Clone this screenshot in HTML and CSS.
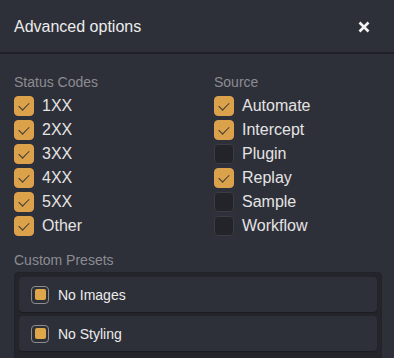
FILE: index.html
```html
<!DOCTYPE html>
<html>
<head>
<meta charset="utf-8">
<link rel="stylesheet" href="styles.css">
</head>
<body>
<div class="dialog">
  <div class="header">
    <div class="title">Advanced options</div>
    <button class="close" aria-label="Close">
      <svg width="12" height="12" viewBox="0 0 12 12"><path d="M1.5 1.5 L10.5 10.5 M10.5 1.5 L1.5 10.5" stroke="#f2f2f2" stroke-width="2.6" stroke-linecap="butt" fill="none"/></svg>
    </button>
  </div>
  <div class="content">
    <div class="columns">
      <div class="group">
        <div class="label">Status Codes</div>
        <div class="row"><span class="box on"></span><span>1XX</span></div>
        <div class="row"><span class="box on"></span><span>2XX</span></div>
        <div class="row"><span class="box on"></span><span>3XX</span></div>
        <div class="row"><span class="box on"></span><span>4XX</span></div>
        <div class="row"><span class="box on"></span><span>5XX</span></div>
        <div class="row"><span class="box on"></span><span>Other</span></div>
      </div>
      <div class="group">
        <div class="label">Source</div>
        <div class="row"><span class="box on"></span><span>Automate</span></div>
        <div class="row"><span class="box on"></span><span>Intercept</span></div>
        <div class="row"><span class="box"></span><span>Plugin</span></div>
        <div class="row"><span class="box on"></span><span>Replay</span></div>
        <div class="row"><span class="box"></span><span>Sample</span></div>
        <div class="row"><span class="box"></span><span>Workflow</span></div>
      </div>
    </div>
    <div class="label presets-label">Custom Presets</div>
    <div class="presets">
      <div class="preset"><span class="pbox"><span class="dot"></span></span><span>No Images</span></div>
      <div class="preset"><span class="pbox"><span class="dot"></span></span><span>No Styling</span></div>
    </div>
  </div>
</div>
</body>
</html>
```
FILE: styles.css
```css
* { box-sizing: border-box; }
html, body {
  margin: 0;
  padding: 0;
  background: #2e3039;
  font-family: "Liberation Sans", Arial, sans-serif;
  overflow: hidden;
}
.dialog {
  width: 394px;
  height: 358px;
  background: #2e3039;
  overflow: hidden;
}
.header {
  height: 54px;
  border-bottom: 2px solid #202127;
  display: flex;
  align-items: center;
  justify-content: space-between;
  padding: 1px 24px 0 14px;
}
.title {
  color: #ececec;
  font-size: 16px;
  line-height: 18px;
}
.close {
  background: none;
  border: 0;
  padding: 0;
  width: 12px;
  height: 12px;
  display: flex;
}
.content {
  padding: 20px 12px 0 14px;
}
.columns {
  display: grid;
  grid-template-columns: 200px 1fr;
}
.label {
  color: #8b8c92;
  font-size: 14px;
  line-height: 16px;
}
.group .label { margin-bottom: 4px; }
.row {
  height: 24px;
  display: flex;
  align-items: center;
  gap: 8px;
  color: #e4e4e4;
  font-size: 16px;
}
.box {
  width: 20px;
  height: 20px;
  border-radius: 4px;
  background: #232429;
  border: 1px solid #3b3d46;
  position: relative;
  flex: none;
}
.box.on {
  background: #dba14b;
  border-color: #dba14b;
}
.box.on::after {
  content: "";
  position: absolute;
  left: 6px;
  top: 3px;
  width: 5px;
  height: 9px;
  border-right: 1px solid #3d3a35;
  border-bottom: 1px solid #3d3a35;
  transform: rotate(45deg);
}
.presets-label {
  margin-top: 14px;
  margin-bottom: 4px;
}
.presets {
  background: #24252b;
  border: 1px solid #222329;
  border-radius: 4px;
  padding: 4px 4px 20px;
  display: flex;
  flex-direction: column;
  gap: 4px;
}
.preset {
  height: 35px;
  background: #2e3039;
  border-radius: 4px;
  box-shadow: 0 1px 1px rgba(0,0,0,0.25);
  display: flex;
  align-items: center;
  gap: 9px;
  padding-left: 12px;
  color: #ececec;
  font-size: 14px;
}
.pbox {
  width: 18px;
  height: 18px;
  border: 1px solid #8c8c8f;
  border-radius: 4px;
  display: flex;
  align-items: center;
  justify-content: center;
  flex: none;
}
.dot {
  width: 11px;
  height: 11px;
  border-radius: 2px;
  background: #e0a64a;
}
```
